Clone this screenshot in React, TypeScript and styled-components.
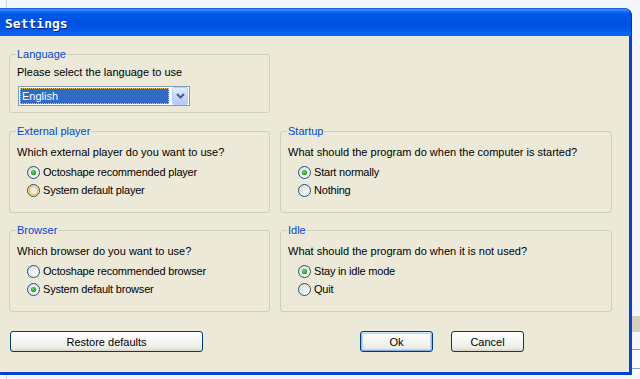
import React from 'react';
import styled, { createGlobalStyle } from 'styled-components';

const GlobalStyle = createGlobalStyle`
  html, body {
    margin: 0;
    padding: 0;
    background: #f4f7fc;
  }
  body {
    font-family: "Liberation Sans", Arial, sans-serif;
    font-size: 11px;
    color: #000;
  }
`;

const Page = styled.div`
  display: flex;
  flex-direction: column;
  width: 640px;
  height: 379px;
  overflow: hidden;
`;

const EdgeStrip = styled.div<{ $h: number }>`
  display: flex;
  height: ${(p) => p.$h}px;
  padding-left: 6px;
`;

const EdgeRule = styled.div`
  width: 1px;
  background: #cdd5e4;
`;

const Middle = styled.div`
  display: flex;
  height: 367px;
`;

const Window = styled.div`
  display: flex;
  flex-direction: column;
  width: 632px;
`;

const TitleBar = styled.div`
  display: flex;
  align-items: center;
  height: 28px;
  padding: 3px 0 0 5px;
  box-sizing: border-box;
  border-radius: 0 8px 0 0;
  background: linear-gradient(
    to bottom,
    #0047d6 0%,
    #3d8cf8 5%,
    #2a82fb 9%,
    #0b6af5 14%,
    #0058e8 22%,
    #0054e3 40%,
    #0053e0 62%,
    #0058ea 76%,
    #0663f5 88%,
    #0a68f6 100%
  );
  box-shadow: inset -1px 0 0 #0034b8;
`;

const Title = styled.span`
  font-family: "DejaVu Sans Mono", "Liberation Mono", monospace;
  font-weight: bold;
  font-size: 13px;
  color: #fff;
  text-shadow: 1px 1px 0 #0a1f7a;
`;

const Frame = styled.div`
  flex: 1;
  display: flex;
  flex-direction: column;
  background: #ece9d8;
  border-right: 3px solid #0a3fd4;
  border-bottom: 3px solid #0a3fd4;
  padding: 12px 17px 20px 9px;
`;

const Groups = styled.div`
  display: grid;
  grid-template-columns: 261px 332px;
  column-gap: 10px;
  row-gap: 11px;
`;

const Group = styled.fieldset<{ $first?: boolean }>`
  margin: 0 0 ${(p) => (p.$first ? 1 : 0)}px 0;
  padding: 0 7px ${(p) => (p.$first ? 6 : 13)}px 7px;
  border: 1px solid #d0d0bf;
  border-radius: 3px;
  min-width: 0;
`;

const Legend = styled.legend`
  margin-left: -1px;
  padding: 0 1px;
  line-height: 12px;
  color: #0046d5;
`;

const Question = styled.div<{ $gap: number }>`
  margin-top: ${(p) => p.$gap}px;
  line-height: 13px;
  white-space: nowrap;
`;

const Options = styled.div`
  display: flex;
  flex-direction: column;
  margin-top: 4px;
`;

const Option = styled.label`
  display: flex;
  align-items: center;
  gap: 3px;
  height: 18px;
  padding-left: 10px;
  letter-spacing: -0.2px;
  white-space: nowrap;
`;

const Combo = styled.div`
  display: flex;
  align-items: center;
  gap: 3px;
  width: 172px;
  height: 20px;
  margin: 7px 0 0 1px;
  padding: 1px;
  box-sizing: border-box;
  border: 1px solid #7f9db9;
  background: #fff;
`;

const ComboValue = styled.div`
  flex: 1;
  height: 16px;
  box-sizing: border-box;
  border: 1px dotted #e8c25c;
  background: #316ac5;
  color: #fff;
  line-height: 14px;
  padding-left: 1px;
`;

const ComboButton = styled.div`
  display: flex;
  align-items: center;
  justify-content: center;
  width: 16px;
  height: 18px;
  box-sizing: border-box;
  border: 1px solid #bccff7;
  border-radius: 2px;
  background: linear-gradient(to bottom, #e3ecfe 0%, #c6d8fc 50%, #b2c9f6 100%);
`;

const Footer = styled.div`
  display: flex;
  margin-top: 19px;
  padding: 0 88px 0 1px;
`;

const Spacer = styled.div`
  flex: 1;
`;

const ButtonPair = styled.div`
  display: flex;
  gap: 18px;
`;

const Button = styled.button<{ $w: number; $default?: boolean }>`
  width: ${(p) => p.$w}px;
  height: 21px;
  padding: 0;
  border: 1px solid #003c74;
  border-radius: 3px;
  background: linear-gradient(to bottom, #ffffff 0%, #f3f3ef 60%, #ecebe6 86%, #d6d0c5 100%);
  font-family: "Liberation Sans", Arial, sans-serif;
  font-size: 11px;
  color: #000;
  box-shadow: ${(p) =>
    p.$default
      ? 'inset 0 1px 0 #cee7ff, inset 1px 0 0 #98b8ea, inset -1px 0 0 #98b8ea, inset 0 -1px 0 #89ade4, inset 0 0 0 2px #bcd4f6'
      : 'none'};
`;

const SideStrip = styled.div`
  display: flex;
  flex-direction: column;
  width: 8px;
`;

const Stripe = styled.div<{ $h: number; $c: string }>`
  height: ${(p) => p.$h}px;
  background: ${(p) => p.$c};
  flex-shrink: 0;
`;

function Radio({ checked, hot }: { checked?: boolean; hot?: boolean }) {
  return (
    <svg width="13" height="13" viewBox="0 0 13 13">
      <defs>
        <linearGradient id="radioFill" x1="0" y1="0" x2="1" y2="1">
          <stop offset="0%" stopColor="#dcdcd7" />
          <stop offset="100%" stopColor="#ffffff" />
        </linearGradient>
        <radialGradient id="radioDot" cx="0.4" cy="0.4" r="0.6">
          <stop offset="0%" stopColor="#63dd5f" />
          <stop offset="100%" stopColor="#1f9a1f" />
        </radialGradient>
      </defs>
      <circle cx="6.5" cy="6.5" r="6" fill="url(#radioFill)" stroke="#1c5180" strokeWidth="1" />
      {hot && <circle cx="6.5" cy="6.5" r="4.3" fill="none" stroke="#f9c35a" strokeWidth="1.8" />}
      {checked && <circle cx="6.5" cy="6.5" r="2.6" fill="url(#radioDot)" />}
    </svg>
  );
}

function Chevron() {
  return (
    <svg width="9" height="6" viewBox="0 0 9 6">
      <path d="M1 1 L4.5 4.5 L8 1" fill="none" stroke="#4d6185" strokeWidth="2" />
    </svg>
  );
}

type Choice = { label: string; checked?: boolean; hot?: boolean };

function ChoiceGroup({ title, question, choices }: { title: string; question: string; choices: Choice[] }) {
  return (
    <Group>
      <Legend>{title}</Legend>
      <Question $gap={9}>{question}</Question>
      <Options>
        {choices.map((c) => (
          <Option key={c.label}>
            <Radio checked={c.checked} hot={c.hot} />
            {c.label}
          </Option>
        ))}
      </Options>
    </Group>
  );
}

export default function App() {
  return (
    <Page>
      <GlobalStyle />
      <EdgeStrip $h={8}>
        <EdgeRule />
      </EdgeStrip>
      <Middle>
        <Window>
          <TitleBar>
            <Title>Settings</Title>
          </TitleBar>
          <Frame>
            <Groups>
              <Group $first>
                <Legend>Language</Legend>
                <Question $gap={6}>Please select the language to use</Question>
                <Combo>
                  <ComboValue>English</ComboValue>
                  <ComboButton>
                    <Chevron />
                  </ComboButton>
                </Combo>
              </Group>
              <div />
              <ChoiceGroup
                title="External player"
                question="Which external player do you want to use?"
                choices={[
                  { label: 'Octoshape recommended player', checked: true },
                  { label: 'System default player', hot: true },
                ]}
              />
              <ChoiceGroup
                title="Startup"
                question="What should the program do when the computer is started?"
                choices={[{ label: 'Start normally', checked: true }, { label: 'Nothing' }]}
              />
              <ChoiceGroup
                title="Browser"
                question="Which browser do you want to use?"
                choices={[
                  { label: 'Octoshape recommended browser' },
                  { label: 'System default browser', checked: true },
                ]}
              />
              <ChoiceGroup
                title="Idle"
                question="What should the program do when it is not used?"
                choices={[{ label: 'Stay in idle mode', checked: true }, { label: 'Quit' }]}
              />
            </Groups>
            <Footer>
              <Button $w={193}>Restore defaults</Button>
              <Spacer />
              <ButtonPair>
                <Button $w={73} $default>
                  Ok
                </Button>
                <Button $w={73}>Cancel</Button>
              </ButtonPair>
            </Footer>
          </Frame>
        </Window>
        <SideStrip>
          <Stripe $h={308} $c="#f4f7fc" />
          <Stripe $h={16} $c="#d6cfbf" />
          <Stripe $h={17} $c="#f4f7fc" />
          <Stripe $h={1} $c="#8fa3c6" />
          <Stripe $h={18} $c="#fbfcfe" />
          <Stripe $h={1} $c="#8fa3c6" />
          <Stripe $h={6} $c="#fbfcfe" />
        </SideStrip>
      </Middle>
      <EdgeStrip $h={4}>
        <EdgeRule />
      </EdgeStrip>
    </Page>
  );
}
